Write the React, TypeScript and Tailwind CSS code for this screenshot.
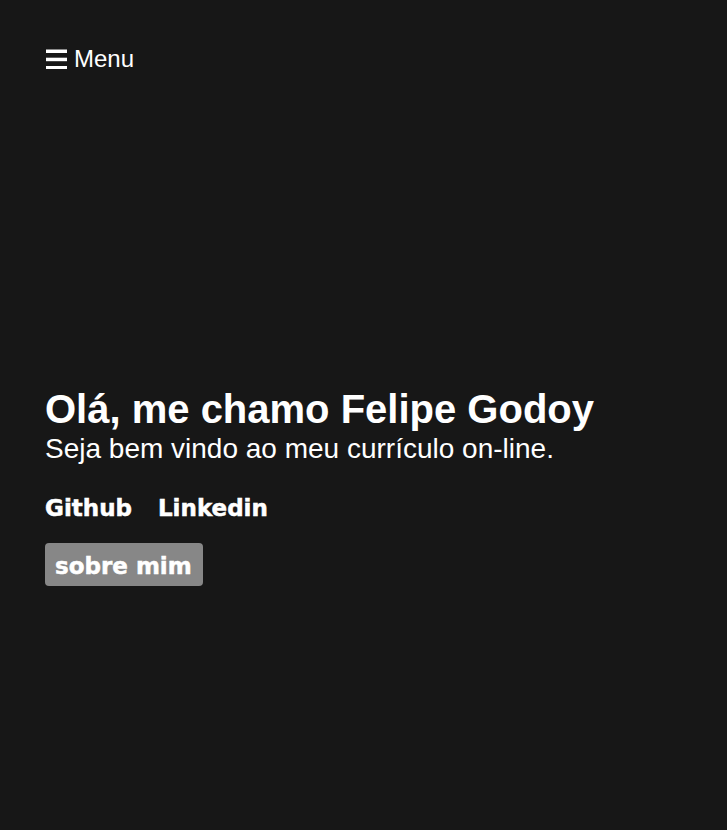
import React from "react";

export default function App() {
  return (
    <div className="min-h-[830px] w-full bg-[#171717] text-white" style={{ fontFamily: '"Liberation Sans", Arial, sans-serif' }}>
      <div className="px-[46px] pt-[45px]">
        <button className="flex items-center gap-[7px] text-[24px] leading-[28px] text-white">
          <svg width="21" height="21" viewBox="0 0 21 21" className="mt-[-2px]">
            <rect x="0" y="1.5" width="21" height="3.5" fill="white" />
            <rect x="0" y="9.7" width="21" height="3.5" fill="white" />
            <rect x="0" y="18" width="21" height="3.5" fill="white" />
          </svg>
          <span>Menu</span>
        </button>
      </div>
      <div className="px-[45px] pt-[313px]">
        <h1 className="text-[40px] font-bold leading-[46px]">Olá, me chamo Felipe Godoy</h1>
        <p className="text-[28px] leading-[34px]">Seja bem vindo ao meu currículo on-line.</p>
        <div
          className="mt-[28px] flex gap-[26px] text-[23px] font-bold leading-[28px] [-webkit-text-stroke:0.5px_white]"
          style={{ fontFamily: '"DejaVu Sans", sans-serif' }}
        >
          <a>Github</a>
          <a>Linkedin</a>
        </div>
        <button
          className="mt-[21px] rounded-[4px] bg-[#878787] pl-[10px] pr-[11px] pt-[10px] pb-[6px] text-[23px] font-bold leading-[27px] text-white [-webkit-text-stroke:0.5px_white]"
          style={{ fontFamily: '"DejaVu Sans", sans-serif' }}
        >
          sobre mim
        </button>
      </div>
    </div>
  );
}
